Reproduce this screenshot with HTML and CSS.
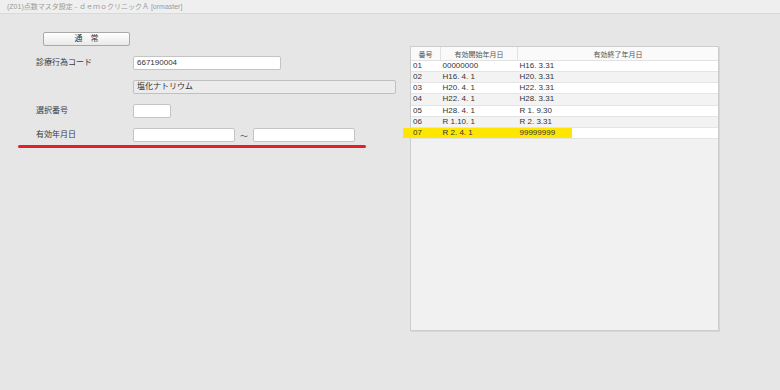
FILE: index.html
```html
<!DOCTYPE html>
<html lang="ja">
<head>
<meta charset="utf-8">
<link rel="stylesheet" href="styles.css">
</head>
<body>
<div class="titlebar">(Z01)点数マスタ設定 - ｄｅｍｏクリニックＡ [ormaster]</div>
<div class="main">
  <div class="form">
    <button class="btn">通　常</button>
    <div class="row row-first">
      <span class="label">診療行為コード</span>
      <div class="field code">667190004</div>
    </div>
    <div class="row">
      <span class="label"></span>
      <div class="field readonly">塩化ナトリウム</div>
    </div>
    <div class="row">
      <span class="label">選択番号</span>
      <div class="field small"></div>
    </div>
    <div class="row">
      <span class="label">有効年月日</span>
      <div class="field date"></div>
      <span class="tilde">～</span>
      <div class="field date"></div>
    </div>
    <div class="redline"></div>
  </div>
  <div class="panel">
    <table class="grid">
      <thead>
        <tr><th class="c1">番号</th><th class="c2">有効開始年月日</th><th class="c3">有効終了年月日</th></tr>
      </thead>
      <tbody>
        <tr><td>01</td><td>00000000</td><td>H16. 3.31</td></tr>
        <tr class="alt"><td>02</td><td>H16. 4. 1</td><td>H20. 3.31</td></tr>
        <tr><td>03</td><td>H20. 4. 1</td><td>H22. 3.31</td></tr>
        <tr class="alt"><td>04</td><td>H22. 4. 1</td><td>H28. 3.31</td></tr>
        <tr><td>05</td><td>H28. 4. 1</td><td>R 1. 9.30</td></tr>
        <tr class="alt"><td>06</td><td>R 1.10. 1</td><td>R 2. 3.31</td></tr>
        <tr class="hl"><td class="hl-first">07</td><td>R 2. 4. 1</td><td class="hl-last">99999999</td></tr>
      </tbody>
    </table>
  </div>
</div>
</body>
</html>
```
FILE: styles.css
```css
html, body {
  margin: 0;
  padding: 0;
}
body {
  width: 780px;
  height: 390px;
  background: #e6e6e6;
  font-family: "Liberation Sans", "Noto Sans CJK JP", sans-serif;
  font-size: 8px;
  color: #333;
  overflow: hidden;
}
.titlebar {
  height: 13px;
  line-height: 13px;
  background: #efefef;
  border-bottom: 1px solid #dadada;
  color: #9a9a9a;
  font-size: 7px;
  padding-left: 7px;
}
.main {
  display: flex;
  align-items: flex-start;
}
.form {
  flex: 0 0 392px;
  padding-left: 18px;
  padding-top: 18px;
  display: flex;
  flex-direction: column;
}
.btn {
  margin-left: 25px;
  width: 87px;
  height: 14px;
  padding: 0;
  border: 1px solid #a9a9a9;
  border-radius: 2px;
  background: linear-gradient(#ffffff, #e9e9e9);
  font-family: "Liberation Sans", "Noto Sans CJK JP", sans-serif;
  font-size: 8px;
  color: #333;
  line-height: 12px;
}
.row {
  display: flex;
  align-items: center;
  height: 14px;
  margin-top: 10px;
  padding-left: 18px;
}
.label {
  flex: 0 0 97px;
  margin-top: -3px;
  color: #3a3a3a;
}
.field {
  box-sizing: border-box;
  height: 14px;
  line-height: 12px;
  border: 1px solid #c4c4c4;
  border-radius: 2px;
  background: #fff;
  padding-left: 3px;
  color: #333;
}
.code { width: 148px; }
.readonly { width: 263px; background: #ececec; border-color: #c0c0c0; }
.small { width: 38px; }
.date { width: 102px; }
.tilde {
  width: 18px;
  text-align: center;
  color: #555;
}
.redline {
  margin-top: 3px;
  width: 348px;
  height: 3px;
  border-radius: 2px;
  background: #e3202a;
}
.panel {
  margin-top: 32px;
  width: 307px;
  height: 283px;
  background: #f1f1f1;
  border: 1px solid #cdcdcd;
  box-shadow: 1px 1px 0 #d6d6d6;
}
.grid {
  width: 100%;
  border-collapse: collapse;
  table-layout: fixed;
}
.grid th {
  height: 13px;
  padding: 0;
  font-weight: normal;
  font-size: 7px;
  color: #555;
  background: #fafafa;
  border-right: 1px solid #e2e2e2;
  border-bottom: 1px solid #e2e2e2;
  text-align: center;
}
.grid th.c3 { border-right: 0; }
.c1 { width: 29px; }
.c2 { width: 76px; }
.grid td {
  height: 10.15px;
  padding: 0 0 0 2px;
  line-height: 10px;
  background: #fff;
  border-bottom: 1px solid #e4e4e4;
  white-space: nowrap;
}
.grid tr.alt td { background: #f3f3f3; }
.grid tr.hl td { background: #ffe600; }
.grid tr.hl td.hl-last {
  background: linear-gradient(to right, #ffe600 54px, #ffffff 54px);
}
.hl-first { position: relative; }
.hl-first::before {
  content: "";
  position: absolute;
  left: -8px;
  top: 0;
  width: 8px;
  height: 100%;
  background: #ffe600;
}
```
